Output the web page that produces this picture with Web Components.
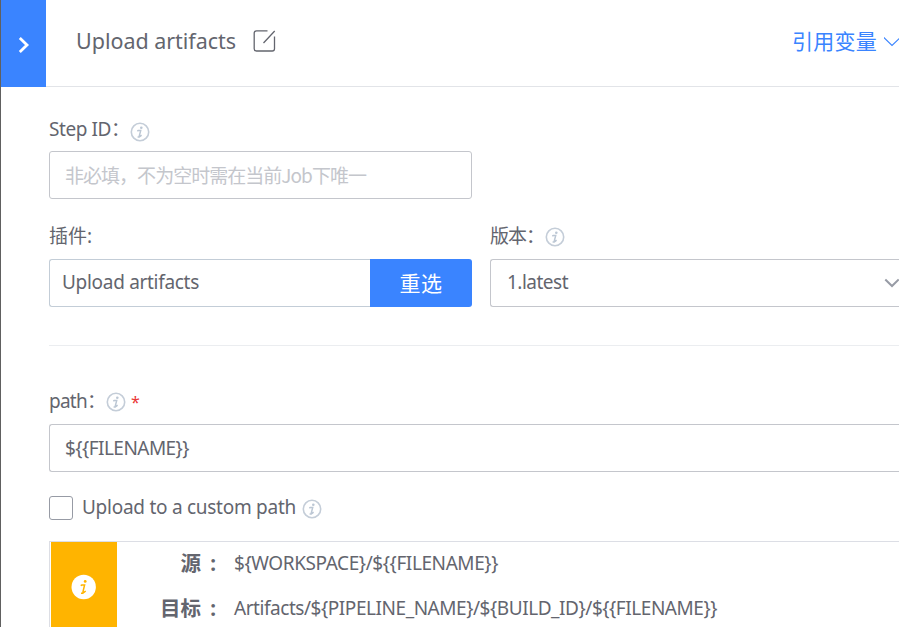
<!DOCTYPE html>
<html lang="zh-CN">
<head>
<meta charset="utf-8">
<title>Upload artifacts</title>
<style>
html,body{margin:0;width:899px;height:627px;overflow:hidden;background:#fff}
body{font-family:"Noto Sans","Noto Sans CJK SC",sans-serif;font-size:19px;color:#63656e}
</style>
</head>
<body>
<step-editor></step-editor>
<script>
const define=(name,html,setup)=>{
  const t=document.createElement('template');t.innerHTML=html;
  customElements.define(name,class extends HTMLElement{
    constructor(){super();this.attachShadow({mode:'open'}).append(t.content.cloneNode(true));}
    connectedCallback(){if(setup)setup.call(this,this.shadowRoot);}
  });
};

/* Single line of text whose tracking is set so that it spans the width in "w". */
define('ui-text',`<style>:host{display:block;white-space:nowrap;flex:none}span{display:inline-block}</style><span><slot></slot></span>`,function(r){
  const w=+this.getAttribute('w'),s=r.querySelector('span');
  if(!w)return;
  const n=[...this.textContent].length,x=s.getBoundingClientRect().width;
  s.style.letterSpacing=((w-x)/n).toFixed(3)+'px';
  this.style.width=w+'px';
});

define('info-icon',`<style>:host{display:block;width:20px;height:20px;flex:none}svg{display:block}</style>
<svg width="20" height="20" viewBox="0 0 20 20"><circle cx="10" cy="10" r="8.7" fill="none" stroke="#c4cdd8" stroke-width="1.6"/><circle cx="11.3" cy="5.7" r="1.3" fill="#bcc7d4"/><path d="M7.3 9.2L8.2 8.6H10.7L9.3 13.8Q9.2 14.8 10.2 14.3L11.6 13.2M7.6 14.9H9.8" fill="none" stroke="#bcc7d4" stroke-width="1.5"/></svg>`);

define('field-label',`<style>:host{display:flex;height:28px;line-height:28px;align-items:flex-start}</style><slot></slot>`);

define('text-box',`<style>:host{display:flex;box-sizing:border-box;height:48px;border:1px solid #c4c6cc;border-radius:3px;line-height:46px;background:#fff}</style><slot></slot>`);

define('primary-button',`<style>:host{display:flex;justify-content:center;width:102px;height:48px;line-height:49px;background:#3a84ff;color:#fff;border-radius:0 3px 3px 0;font-size:21px}</style><slot></slot>`);

define('check-box',`<style>:host{display:block;box-sizing:border-box;width:24px;height:24px;border:1px solid #979ba5;border-radius:3px;flex:none}</style>`);

define('page-header',`<style>
:host{display:flex;height:87px}
.toggle{width:45px;height:87px;background:#3a84ff;display:flex;justify-content:center;align-items:center;flex:none}
.bar{flex:1;box-sizing:border-box;border-bottom:1px solid #e2e4e8;display:flex;padding-left:30px}
.title{font-size:21.5px;line-height:40px;margin-top:21px}
.edit{margin:29px 0 0 16px}
.link{margin:21px 2px 0 auto;font-size:21px;line-height:40px;color:#3a84ff}
.drop{margin:36px 0 0 5px}
svg{display:block;flex:none}
</style>
<div class="toggle"><svg width="14" height="18" viewBox="0 0 14 18" style="margin-top:3px"><path d="M2.8 2L10 9L2.8 16" fill="none" stroke="#fff" stroke-width="2.8"/></svg></div>
<div class="bar"><ui-text class="title" w="160">Upload artifacts</ui-text>
<svg class="edit" width="24" height="24" viewBox="0 0 24 24"><path d="M15.5 1.8H4.5Q2.2 1.8 2.2 4.1V19.7Q2.2 22 4.5 22H20.2Q22.5 22 22.5 19.7V7.5M11.5 14L22.7 2" fill="none" stroke="#63656e" stroke-width="1.3"/></svg>
<ui-text class="link" w="85">引用变量</ui-text>
<svg class="drop" width="15" height="12" viewBox="0 0 15 12"><path d="M-.2 1.5L8 9.5L16.2 1.5" fill="none" stroke="#3a84ff" stroke-width="1.1"/></svg></div>`);

define('path-summary',`<style>
:host{display:flex;box-sizing:border-box;height:86px;border:solid #dcdee5;border-width:1px 0 0 1px;padding-left:1px}
.mark{width:66px;height:85px;background:#ffb400;flex:none;display:flex;justify-content:center;padding-top:32px;box-sizing:border-box}
.rows{display:grid;grid-template-columns:84px 1fr;grid-auto-rows:45px;line-height:42px;column-gap:33px}
.key{display:flex;justify-content:flex-end;font-weight:700;font-size:20.5px}
.key i{font-style:normal;width:0;text-indent:4px}
</style>
<div class="mark"><svg width="26" height="26" viewBox="0 0 26 26"><circle cx="12.7" cy="13" r="12.2" fill="#fff"/><circle cx="14.2" cy="7.4" r="1.4" fill="#ffb400"/><path d="M9.7 11.7L10.8 11H13.6L12 17.7Q11.8 19 13 18.4L14.7 17M10 19.3H12.5" fill="none" stroke="#ffb400" stroke-width="1.5"/></svg></div>
<div class="rows">
<div class="key">源<i>&nbsp;:</i></div><ui-text w="264">\${WORKSPACE}/\${{FILENAME}}</ui-text>
<div class="key">目标<i>&nbsp;:</i></div><ui-text w="483">Artifacts/\${PIPELINE_NAME}/\${BUILD_ID}/\${{FILENAME}}</ui-text>
</div>`);

define('step-editor',`<style>
:host{display:block;box-sizing:border-box;width:899px;height:627px;border-left:1px solid #606060;overflow:hidden}
main{padding:28px 0 0 48px}
.id{width:423px;margin-top:8px}
.ph{color:#c4c6cc;margin-left:15px;line-height:46px;font-family:"Noto Sans CJK SC",sans-serif}
.pair{display:grid;grid-template-columns:423px 1fr;column-gap:18px;margin-top:23px}
.group{display:flex;margin-top:9px}
.group text-box{flex:1;border-right:0;border-radius:3px 0 0 3px;border-color:#c3cdd7}
.group text-box,.sel{line-height:45px}
.sel{margin-top:9px;border-right:0;border-radius:3px 0 0 3px;justify-content:space-between}
hr{border:0;height:1px;background:#ebedf0;margin:38px 0 41px}
.full{margin-top:9px;border-right:0;border-radius:3px 0 0 3px}
.check{display:flex;margin-top:24px;height:24px;line-height:22px}
path-summary{margin-top:21px}
info-icon{margin-top:5px}
.star{color:#ea3636;font-size:16px;margin:1px 0 0 5px}
</style>
<page-header></page-header>
<main>
<field-label><ui-text w="62">Step ID</ui-text><ui-text w="19">：</ui-text><info-icon style="margin-top:7px"></info-icon></field-label>
<text-box class="id"><ui-text class="ph" w="301">非必填，不为空时需在当前Job下唯一</ui-text></text-box>
<div class="pair">
<div><field-label><ui-text w="38">插件</ui-text><ui-text>:</ui-text></field-label>
<div class="group"><text-box><ui-text style="margin-left:12px" w="137">Upload artifacts</ui-text></text-box><primary-button><ui-text w="43">重选</ui-text></primary-button></div></div>
<div><field-label><ui-text w="36">版本</ui-text><ui-text w="19">：</ui-text><info-icon></info-icon></field-label>
<text-box class="sel"><ui-text style="margin-left:16px" w="61">1.latest</ui-text><svg width="16" height="12" viewBox="0 0 16 12" style="margin-top:17px"><path d="M2.3 2.5L9 9L15.7 2.5" fill="none" stroke="#979ba5" stroke-width="2"/></svg></text-box></div>
</div>
<hr>
<field-label><ui-text w="38">path</ui-text><ui-text w="19">：</ui-text><info-icon></info-icon><ui-text class="star">*</ui-text></field-label>
<text-box class="full"><ui-text style="margin-left:15px" w="124">\${{FILENAME}}</ui-text></text-box>
<div class="check"><check-box></check-box><ui-text style="margin-left:9px" w="214">Upload to a custom path</ui-text><info-icon style="margin:3px 0 0 6px"></info-icon></div>
<path-summary></path-summary>
</main>`);
</script>
</body>
</html>
